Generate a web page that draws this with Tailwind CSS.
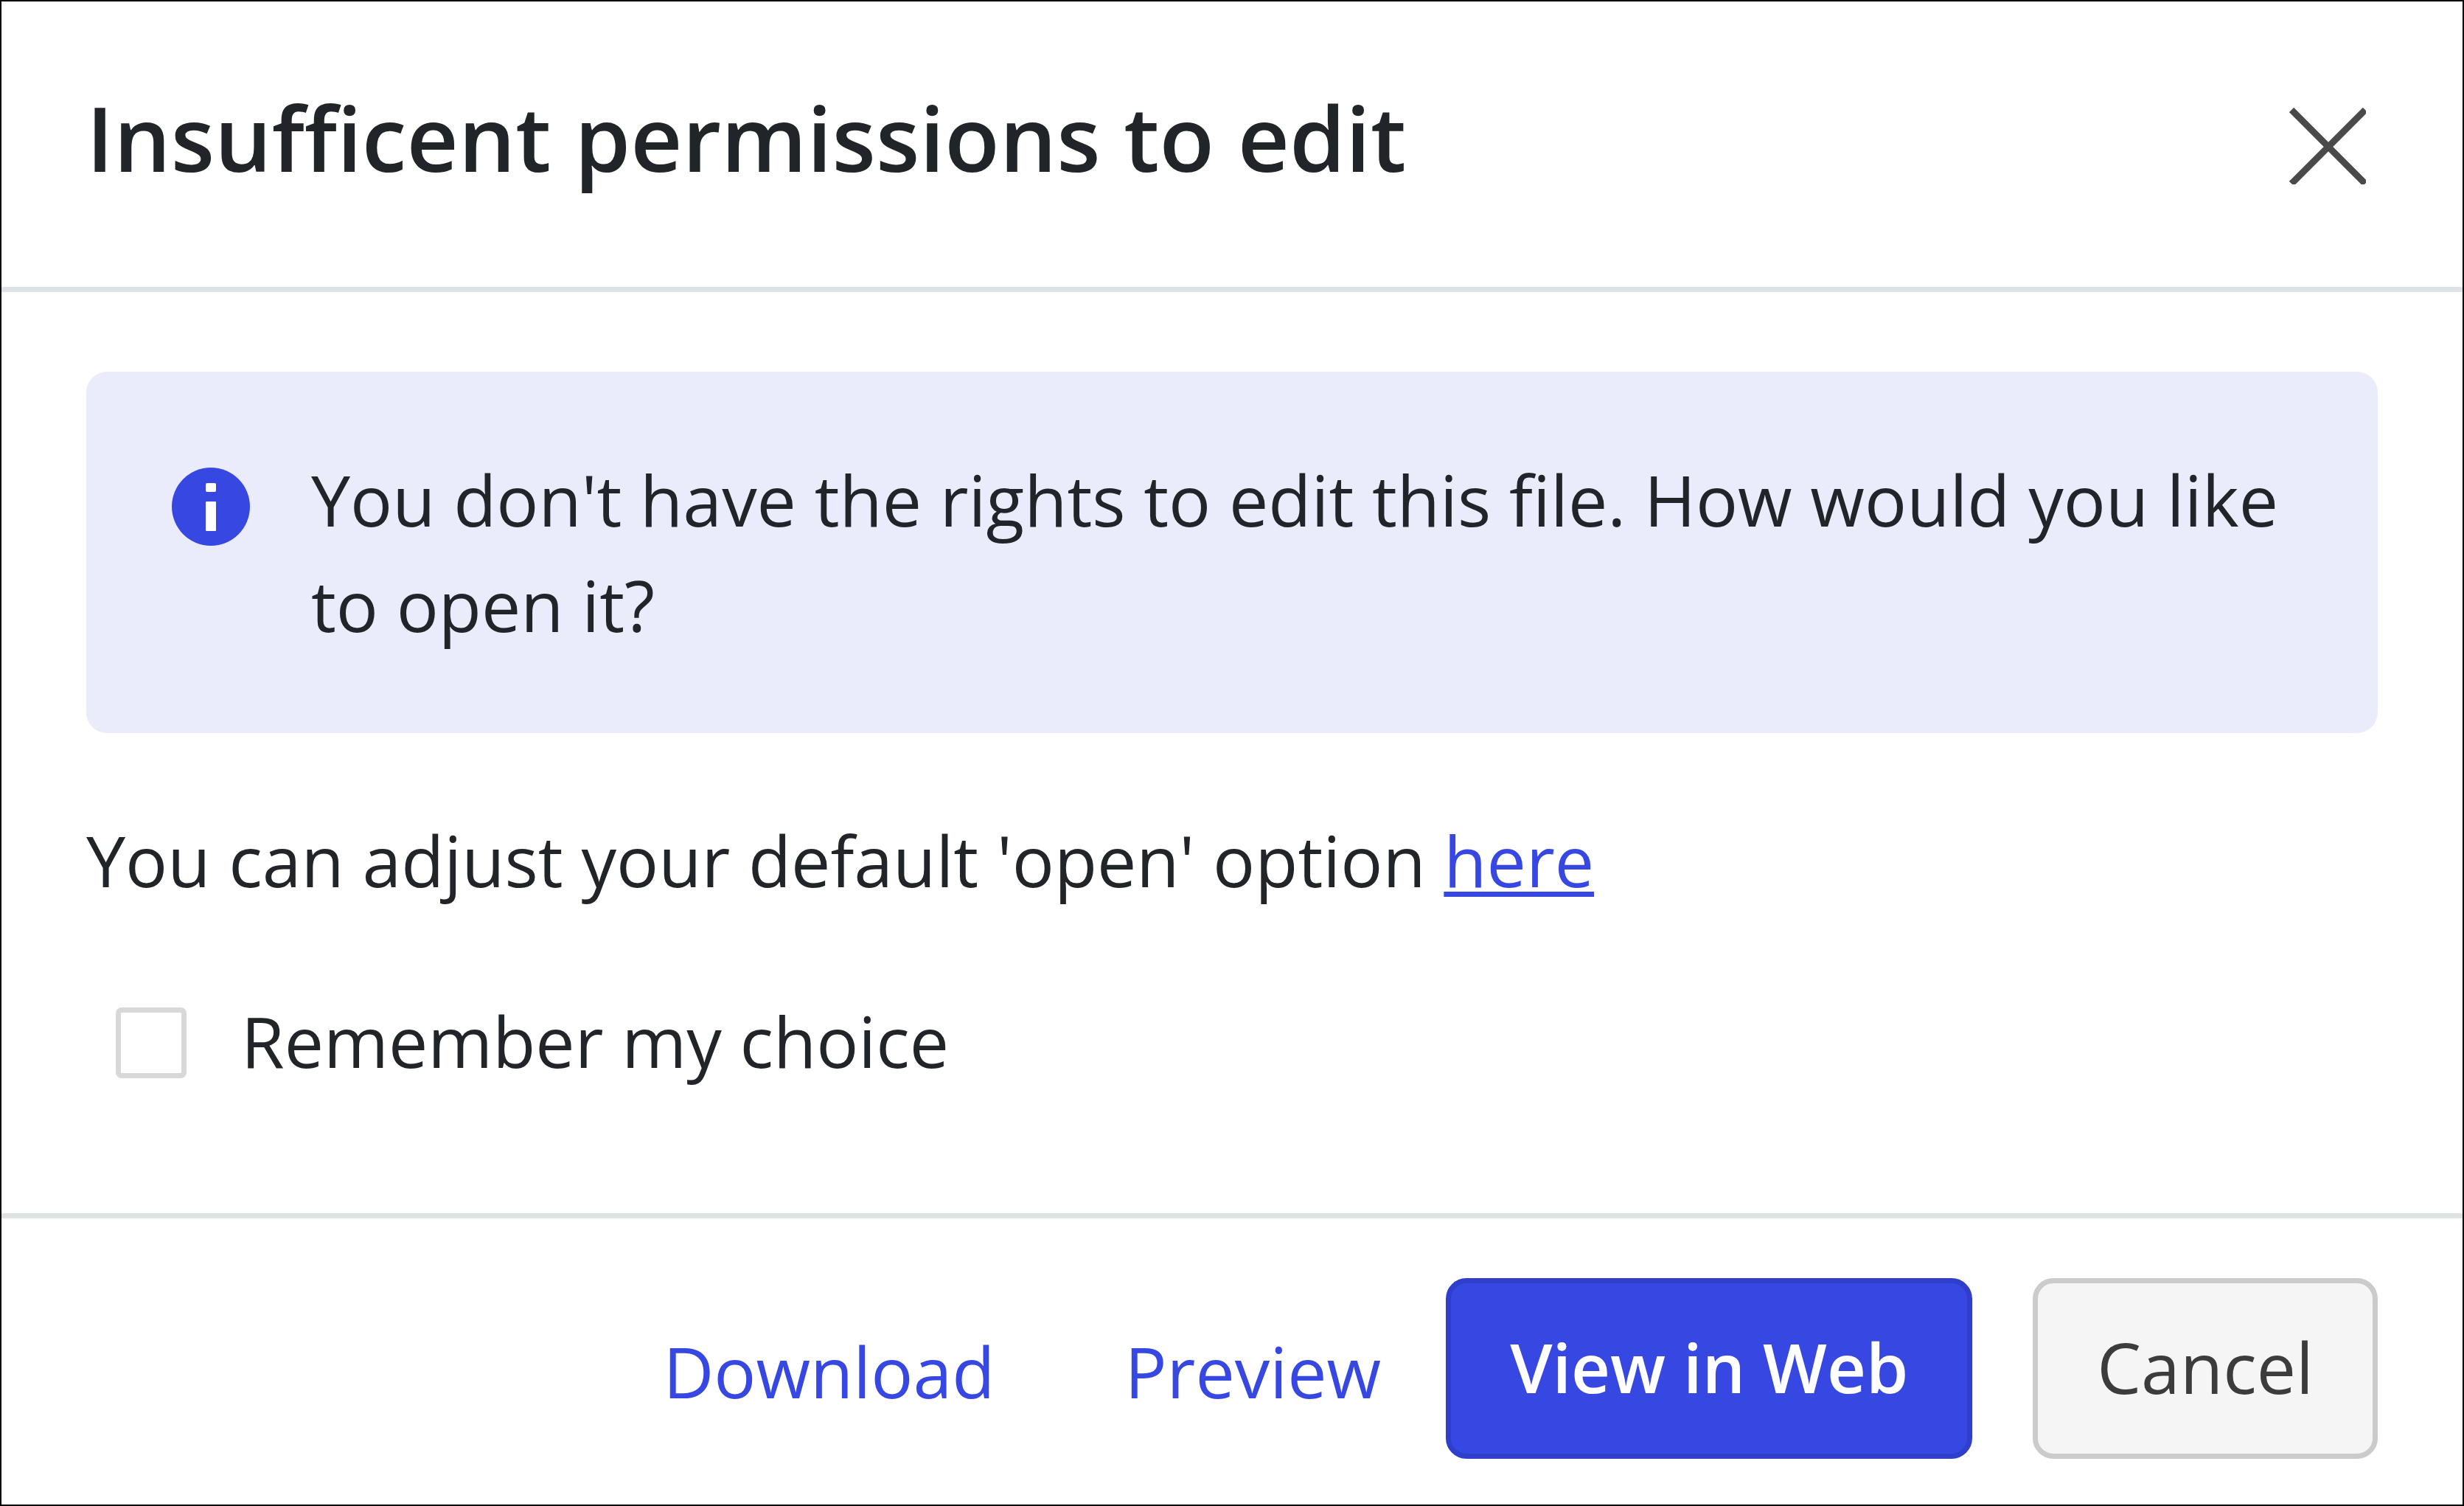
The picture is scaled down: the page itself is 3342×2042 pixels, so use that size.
<!DOCTYPE html>
<html lang="en">
<head>
  <meta charset="UTF-8" />
  <meta name="viewport" content="width=device-width, initial-scale=1" />
  <title>Insufficent permissions to edit</title>
  <script src="https://cdn.jsdelivr.net/npm/@tailwindcss/browser@4"></script>
  <style>
    body {
      font-family: 'Open Sans', 'Noto Sans', sans-serif;
    }
  </style>
</head>
<body class="bg-white text-[#212529] text-[95px] leading-[143px]">
  <div role="dialog" aria-labelledby="dialogTitle" class="min-h-screen flex flex-col border-2 border-black">
    <header class="flex items-center justify-between px-[115px] pt-[90px] pb-[109px] border-b-7 border-[#dde2e4]">
      <h1 id="dialogTitle" class="text-[122px] leading-[188px] font-semibold">Insufficent permissions to edit</h1>
      <button type="button" aria-label="Close" class="mt-6 p-4">
        <svg class="w-[104px] h-[104px]" viewBox="0 0 104 104" fill="none" stroke="#4a4a4a" stroke-width="9">
          <path d="M3 3L103 103M103 3L3 103" />
        </svg>
      </button>
    </header>

    <main class="grow px-[115px] pt-[108px]">
      <div role="alert" class="flex items-start rounded-[28px] bg-[#ebecfb] px-[115px] py-[102px]">
        <svg class="w-[108px] h-[108px] mt-7 mr-[82px] shrink-0" viewBox="0 0 108 108">
          <circle cx="54" cy="53" r="53" fill="#3748e2" />
          <rect x="47" y="21" width="14" height="12" rx="2" fill="#fff" />
          <rect x="47" y="46" width="14" height="40" rx="1" fill="#fff" />
        </svg>
        <p>You don't have the rights to edit this file. How would you like to open it?</p>
      </div>

      <p class="mt-[101px]">You can adjust your default 'open' option <a href="#" class="text-[#3748e2] underline decoration-7 underline-offset-[6px]">here</a></p>

      <div class="flex items-center mt-[102px] ml-10">
        <input type="checkbox" id="remember" class="appearance-none size-24 mt-1 rounded-lg border-7 border-[#d8d8d8] bg-white" />
        <label for="remember" class="pl-[74px]">Remember my choice</label>
      </div>
    </main>

    <footer class="flex items-center justify-end border-t-7 border-[#dde2e4] px-[115px] pt-[81px] pb-[62px]">
      <a href="#" class="mt-2 mr-[176px] text-[#3748e2]">Download</a>
      <a href="#" class="mt-2 mr-[88px] text-[#3748e2]">Preview</a>
      <button type="button" class="h-[245px] px-20 pb-1 mr-[82px] rounded-[28px] border-7 border-[#2f3fcb] bg-[#3748e2] text-white text-[92px] font-semibold">View in Web</button>
      <button type="button" class="h-[245px] px-20 pb-1 rounded-[28px] border-7 border-[#cbcbcb] bg-[#f5f5f5] text-[#3c3c3c]">Cancel</button>
    </footer>
  </div>
</body>
</html>
